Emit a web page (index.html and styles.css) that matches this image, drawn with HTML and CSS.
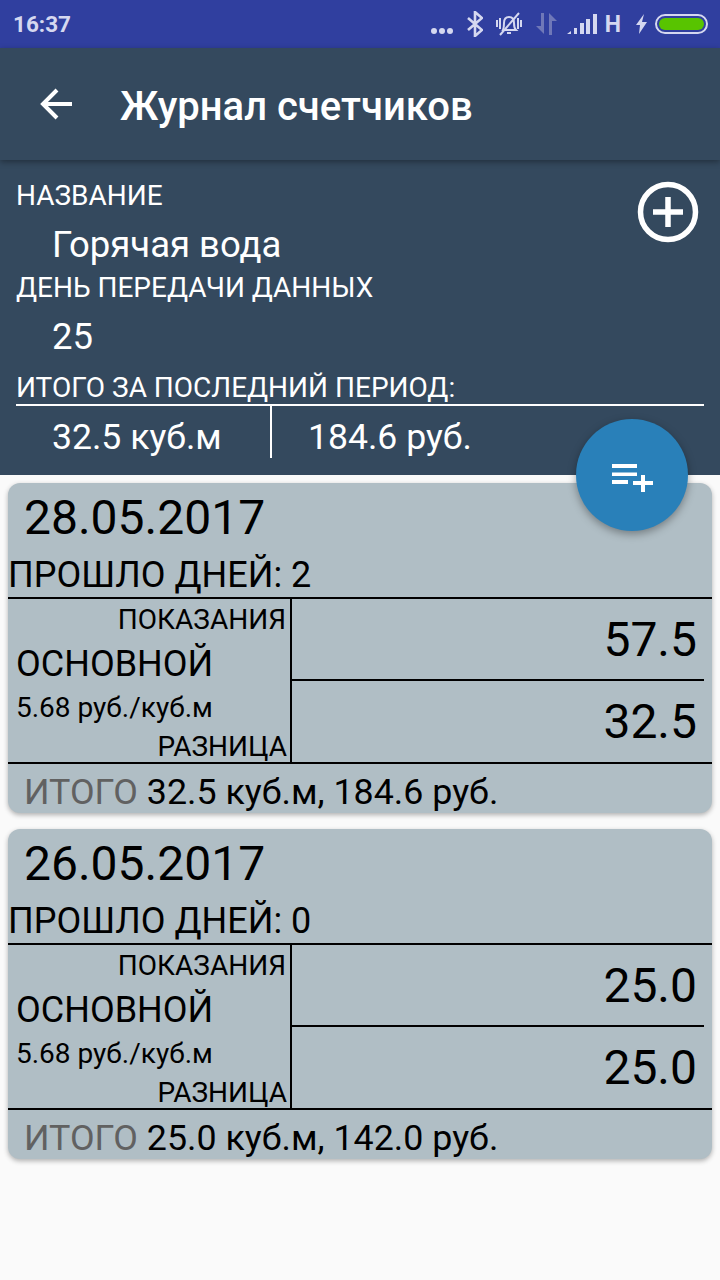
FILE: index.html
```html
<!DOCTYPE html>
<html lang="ru">
<head>
  <meta charset="UTF-8" />
  <meta name="viewport" content="width=device-width, initial-scale=1" />
  <title>Журнал счетчиков</title>
  <link rel="stylesheet" href="styles.css">
</head>
<body>

  <div class="status-bar">
    <span class="clock">16:37</span>
    <div class="status-icons">
      <span class="dots"><i></i><i></i><i></i></span>
      <svg class="ic-bt" width="16" height="26" viewBox="0 0 16 26" fill="none" stroke="#d5d8f0" stroke-width="2.6"><path d="M1 7l14 12-7 6V1l7 6L1 19"/></svg>
      <svg class="ic-bell" width="30" height="26" viewBox="0 0 30 26" fill="none" stroke="#d5d8f0" stroke-width="2"><path d="M9 19c1-2 1-4 1-7 0-4 2-6 5-6s5 2 5 6c0 3 0 5 2 7z"/><path d="M13 22h4M3 9v7M6 7v11M24 7v11M27 9v7M6 24L25 2"/></svg>
      <svg class="ic-data" width="21" height="22" viewBox="0 0 21 22" fill="#6f78b8"><path d="M5 0h3v21L0 13h5zM13 0l8 8h-5v14h-3z"/></svg>
      <svg class="ic-signal" width="30" height="22" viewBox="0 0 30 22" fill="#d5d8f0"><path d="M0 21l4-3v3zM7 21v-6h3v6zM13 21V10h4v11zM19 21V6h4v15zM26 21V1h4v20z"/></svg>
      <span class="net">H</span>
      <svg class="ic-bolt" width="11" height="20" viewBox="0 0 11 20" fill="#d5d8f0"><path d="M8 0L0 11h4l-1 9 8-12H6z"/></svg>
      <span class="battery"><span class="battery-fill"></span></span>
    </div>
  </div>

  <header class="toolbar">
    <svg class="back" width="32" height="32" viewBox="0 0 32 32" fill="none" stroke="#fff" stroke-width="4"><path d="M32 16H3M17 2L3 16l14 14"/></svg>
    <h1>Журнал счетчиков</h1>
  </header>

  <section class="summary">
    <div class="summary-top">
      <div class="summary-info">
        <div class="label">НАЗВАНИЕ</div>
        <div class="value">Горячая вода</div>
        <div class="label">ДЕНЬ ПЕРЕДАЧИ ДАННЫХ</div>
        <div class="value">25</div>
      </div>
      <svg class="add-round" width="62" height="62" viewBox="0 0 62 62" fill="none" stroke="#fff"><circle cx="31" cy="31" r="27.500" stroke-width="5.500"/><path d="M31 16v30M16 31h30" stroke-width="5.500"/></svg>
    </div>
    <div class="label total-label">ИТОГО ЗА ПОСЛЕДНИЙ ПЕРИОД:</div>
    <div class="totals">
      <div class="total-cell first">32.5 куб.м</div>
      <div class="total-cell">184.6 руб.</div>
    </div>
  </section>

  <button class="fab">
    <svg width="42" height="28" viewBox="0 0 42 28" fill="#fff"><path d="M0 0h25v4H0zM0 8.500h25v3.500H0zM0 16h16v4H0zM29 11h4v6h8v4h-8v7h-4v-7h-8v-4h8z"/></svg>
  </button>

  <main class="list">
    <article class="card">
      <div class="card-date">28.05.2017</div>
      <div class="card-days">ПРОШЛО ДНЕЙ: 2</div>
      <div class="readings">
        <div class="readings-left">
          <div class="small-right first">ПОКАЗАНИЯ</div>
          <div class="meter-name">ОСНОВНОЙ</div>
          <div class="rate">5.68 руб./куб.м</div>
          <div class="small-right">РАЗНИЦА</div>
        </div>
        <div class="readings-right">
          <div class="num num-top">57.5</div>
          <div class="num">32.5</div>
        </div>
      </div>
      <div class="card-total"><span class="muted">ИТОГО</span> 32.5 куб.м, 184.6 руб.</div>
    </article>

    <article class="card">
      <div class="card-date">26.05.2017</div>
      <div class="card-days">ПРОШЛО ДНЕЙ: 0</div>
      <div class="readings">
        <div class="readings-left">
          <div class="small-right first">ПОКАЗАНИЯ</div>
          <div class="meter-name">ОСНОВНОЙ</div>
          <div class="rate">5.68 руб./куб.м</div>
          <div class="small-right">РАЗНИЦА</div>
        </div>
        <div class="readings-right">
          <div class="num num-top">25.0</div>
          <div class="num">25.0</div>
        </div>
      </div>
      <div class="card-total"><span class="muted">ИТОГО</span> 25.0 куб.м, 142.0 руб.</div>
    </article>
  </main>

</body>
</html>
```

FILE: styles.css
```css
html, body {
  margin: 0;
  height: 1280px;
  overflow: hidden;
}
body {
  position: relative;
  font-family: Roboto, sans-serif;
  background: #fafafa;
  color: #000;
}
.status-bar {
  height: 48px;
  background: #303f9f;
  color: #d5d8f0;
  display: flex;
  align-items: center;
  justify-content: space-between;
  padding: 0 12px 0 13px;
  box-sizing: border-box;
}
.clock {
  font-size: 22.5px;
  font-weight: 700;
}
.status-icons {
  display: flex;
  align-items: center;
}
.dots {
  display: flex;
  gap: 2px;
  margin-top: 14px;
}
.dots i {
  width: 6px;
  height: 6px;
  border-radius: 50%;
  background: #d5d8f0;
}
.ic-bt {
  margin-left: 14px;
}
.ic-bell {
  margin-left: 11px;
}
.ic-data {
  margin-left: 12px;
}
.ic-signal {
  margin-left: 10px;
}
.net {
  font-size: 23px;
  font-weight: 700;
  margin-left: 8px;
}
.ic-bolt {
  margin-left: 15px;
}
.battery {
  width: 53px;
  height: 20px;
  margin-left: 8px;
  border: 2px solid #d5d8f0;
  border-radius: 10px;
  padding: 2px;
  box-sizing: border-box;
}
.battery-fill {
  display: block;
  height: 100%;
  background: #58c400;
  border-radius: 6px;
}
.toolbar {
  height: 112px;
  background: #34495e;
  display: flex;
  align-items: center;
  padding-left: 40px;
  box-sizing: border-box;
  box-shadow: 0 2px 6px rgba(0, 0, 0, 0.35);
  position: relative;
}
.toolbar h1 {
  margin: 4px 0 0 48px;
  color: #fff;
  font-size: 40px;
  font-weight: 500;
}
.summary {
  height: 315px;
  background: #34495e;
  color: #fff;
  padding: 20px 16px 0;
  box-sizing: border-box;
}
.summary-top {
  display: flex;
  justify-content: space-between;
  align-items: flex-start;
}
.label {
  font-size: 28px;
  line-height: 32px;
}
.value {
  font-size: 36.5px;
  line-height: 56px;
  padding: 5px 0 0 36px;
  margin-bottom: -1px;
}
.add-round {
  margin: 1px 5px 0 0;
}
.total-label {
  border-bottom: 2px solid #fff;
  padding-top: 8px;
}
.totals {
  display: flex;
  height: 52px;
}
.total-cell {
  font-size: 35.6px;
  line-height: 62px;
  padding-left: 36px;
}
.total-cell.first {
  width: 256px;
  box-sizing: border-box;
  border-right: 2px solid #fff;
}
.fab {
  position: absolute;
  top: 419px;
  left: 576px;
  width: 112px;
  height: 112px;
  border: none;
  border-radius: 50%;
  background: #2980b9;
  box-shadow: 0 3px 8px rgba(0, 0, 0, 0.35);
  padding: 8px 0 0 2px;
}
.list {
  padding: 8px;
  display: flex;
  flex-direction: column;
  gap: 16px;
}
.card {
  height: 330px;
  background: #b0bec5;
  border-radius: 12px;
  box-shadow: 0 2px 5px rgba(0, 0, 0, 0.3);
  overflow: hidden;
}
.card-date {
  font-size: 48px;
  line-height: 68px;
  padding: 1px 0 0 16px;
}
.card-days {
  font-size: 36px;
  line-height: 46px;
  margin-bottom: -1px;
}
.readings {
  display: flex;
  height: 163px;
  border-top: 2px solid #000;
  border-bottom: 2px solid #000;
}
.readings-left {
  width: 284px;
  box-sizing: border-box;
  border-right: 2px solid #000;
}
.small-right {
  font-size: 28px;
  line-height: 38px;
  text-align: right;
  padding-right: 3px;
}
.small-right.first {
  padding-top: 2px;
  padding-right: 4px;
}
.meter-name {
  font-size: 36px;
  line-height: 48px;
  padding: 1px 0 0 8px;
}
.rate {
  font-size: 28px;
  line-height: 40px;
  padding-left: 8px;
}
.readings-right {
  flex: 1;
  padding-right: 8px;
}
.num {
  height: 82px;
  font-size: 48px;
  line-height: 82px;
  text-align: right;
  padding-right: 7px;
  box-sizing: border-box;
}
.num-top {
  border-bottom: 2px solid #000;
}
.card-total {
  font-size: 35.8px;
  line-height: 56px;
  padding-left: 16px;
}
.muted {
  color: #616161;
}
```
